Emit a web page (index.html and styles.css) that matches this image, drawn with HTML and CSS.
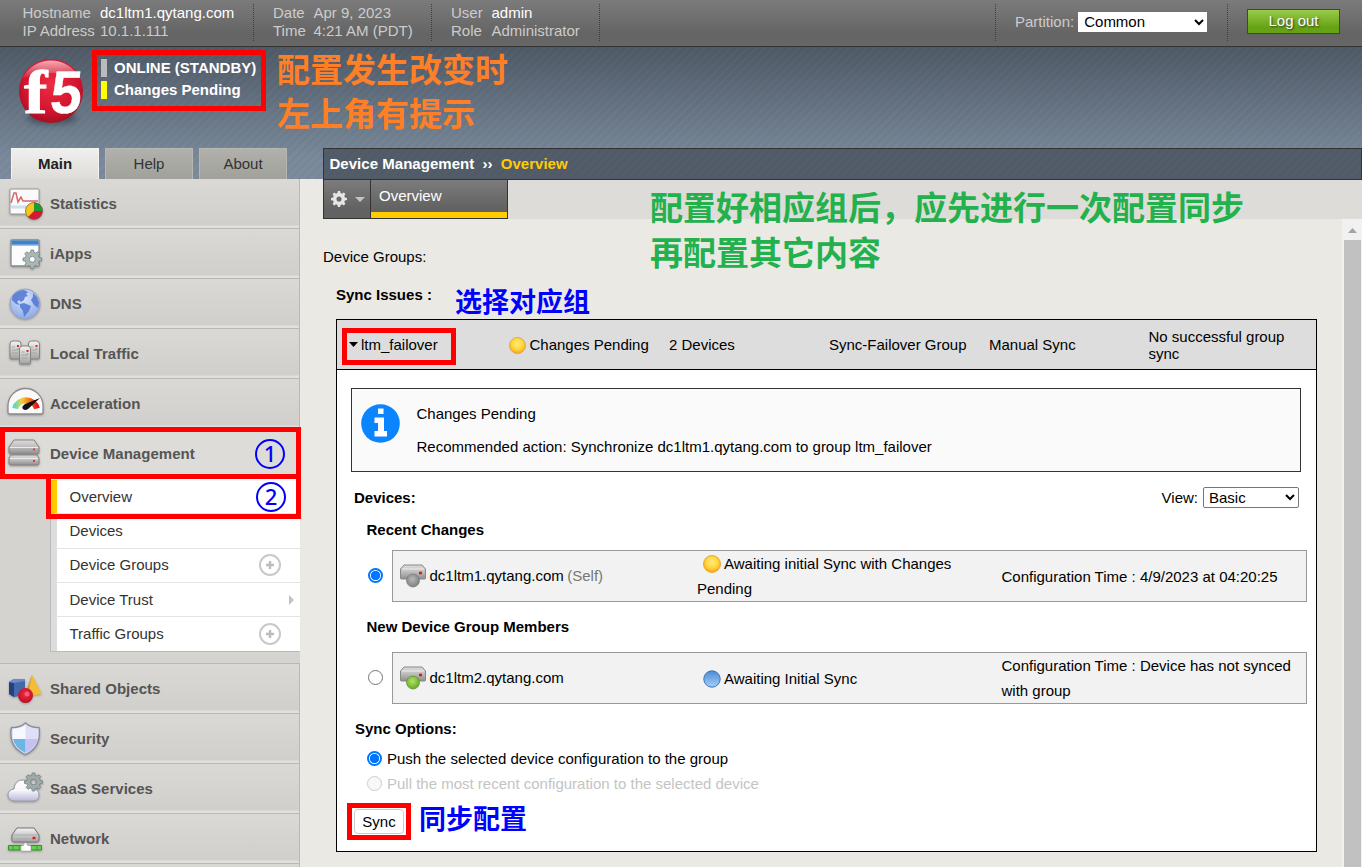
FILE: index.html
```
<!DOCTYPE html>
<html lang="en">
<head>
<meta charset="utf-8">
<title>Device Management - Overview</title>
<link rel="stylesheet" href="styles.css">
</head>
<body>
<svg class="defs" width="0" height="0">
  <defs>
    <linearGradient id="metal" x1="0" y1="0" x2="0" y2="1"><stop offset="0" stop-color="#f4f4f4"/><stop offset="1" stop-color="#a2a2a2"/></linearGradient>
    <radialGradient id="sun" cx=".5" cy=".4" r=".6"><stop offset="0" stop-color="#ffeb85"/><stop offset=".6" stop-color="#ffd535"/><stop offset="1" stop-color="#f2a21c"/></radialGradient>
    <linearGradient id="blue" x1="0" y1="0" x2="0" y2="1"><stop offset="0" stop-color="#4a8bd4"/><stop offset="1" stop-color="#a4d0fa"/></linearGradient>
    <radialGradient id="green" cx=".45" cy=".4" r=".6"><stop offset="0" stop-color="#b4e367"/><stop offset="1" stop-color="#62aa26"/></radialGradient>
    <radialGradient id="gray" cx=".45" cy=".4" r=".6"><stop offset="0" stop-color="#b8b8b8"/><stop offset="1" stop-color="#808080"/></radialGradient>
    <radialGradient id="globe" cx=".45" cy=".3" r=".75"><stop offset="0" stop-color="#dbe5fd"/><stop offset="1" stop-color="#86a5e6"/></radialGradient>
    <radialGradient id="ball" cx=".5" cy=".4" r=".65"><stop offset="0" stop-color="#ec2c42"/><stop offset=".65" stop-color="#d3142e"/><stop offset="1" stop-color="#96101f"/></radialGradient>
    <linearGradient id="shine" x1="0" y1="0" x2="0" y2="1"><stop offset="0" stop-color="#fff" stop-opacity=".65"/><stop offset="1" stop-color="#fff" stop-opacity="0"/></linearGradient>
    <linearGradient id="cloud" x1="0" y1="0" x2="0" y2="1"><stop offset="0" stop-color="#fff"/><stop offset=".5" stop-color="#f6f6fb"/><stop offset="1" stop-color="#b9b9da"/></linearGradient>
    <linearGradient id="dial" x1="0" y1="0" x2="1" y2="0"><stop offset="0" stop-color="#56dcc8"/><stop offset=".3" stop-color="#f2d13a"/><stop offset=".6" stop-color="#f2851c"/><stop offset="1" stop-color="#e8141c"/></linearGradient>
    <linearGradient id="slab" x1="0" y1="0" x2="0" y2="1"><stop offset="0" stop-color="#dcdcdc"/><stop offset=".5" stop-color="#bdbdbd"/><stop offset="1" stop-color="#8e8e8e"/></linearGradient>
    <path id="cog" d="M8.6 0h2.8l.5 2.6 1.9.8L16 1.9l2 2-1.4 2.3.8 1.9 2.6.5v2.8l-2.6.5-.8 1.9 1.4 2.2-2 2-2.2-1.4-1.9.8-.5 2.6H8.6l-.5-2.6-1.9-.8L4 18.1l-2-2 1.4-2.2-.8-1.9-2.6-.5V8.7l2.6-.5.8-1.9L2 4l2-2 2.2 1.4 1.9-.8zM10 6.8a3.2 3.2 0 1 0 0 6.4a3.2 3.2 0 0 0 0-6.4z" fill-rule="evenodd"/>
  </defs>
</svg>

<header class="topbar">
  <dl class="facts host"><dt>Hostname</dt><dd class="hi">dc1ltm1.qytang.com</dd><dt>IP Address</dt><dd>10.1.1.111</dd></dl>
  <dl class="facts date"><dt>Date</dt><dd>Apr 9, 2023</dd><dt>Time</dt><dd>4:21 AM (PDT)</dd></dl>
  <dl class="facts user"><dt>User</dt><dd class="hi">admin</dd><dt>Role</dt><dd>Administrator</dd></dl>
  <div class="partition"><label for="part">Partition:</label><select id="part"><option>Common</option></select></div>
  <div class="logout"><button class="btn-logout">Log out</button></div>
</header>

<div class="banner">
  <div class="brand">
    <svg class="logo" width="72" height="72" viewBox="0 0 72 72">
      <ellipse class="shade" cx="37" cy="61" rx="25" ry="6"/>
      <circle cx="36" cy="34" r="32" fill="url(#ball)"/>
      <path d="M7 22A32 32 0 0 1 65 22Q36 10 7 22z" fill="url(#shine)"/>
      <text class="logo-f" transform="translate(9 56) scale(1.15 1)">f</text>
      <text class="logo-5" transform="translate(34 56) skewX(-5) scale(.94 1)">5</text>
    </svg>
    <ul class="status"><li>ONLINE (STANDBY)</li><li class="pending">Changes Pending</li></ul>
  </div>
  <nav class="tabs"><a class="tab active">Main</a><a class="tab">Help</a><a class="tab">About</a></nav>
</div>

<div class="body">
  <aside class="sidebar">
    <a class="item"><svg class="ico" width="36" height="36" viewBox="0 0 36 36"><rect x="2" y="2" width="29" height="25" rx="1" fill="#fafafa" stroke="#9a9a9a"/><path d="M3 20h28" stroke="#cfdeee" stroke-width="3"/><path d="M3 16 6 6h2l2 9 3-5 2 4h15" fill="none" stroke="#d8646c" stroke-width="1.500"/><circle cx="26" cy="24" r="8.500" fill="#d81832"/><path d="M26 24V15.500a8.500 8.500 0 0 1 8.500 8.500z" fill="#1c9b35"/><path d="M26 24V15.500a8.500 8.500 0 0 0-6 14.500z" fill="#f3c51d"/><circle cx="26" cy="24" r="8.500" fill="none" stroke="#70451f" stroke-opacity=".5"/></svg>Statistics</a>
    <a class="item"><svg class="ico" width="36" height="36" viewBox="0 0 36 36"><rect x="3" y="3" width="28" height="26" rx="1" fill="#fcfcfc" stroke="#858b91" stroke-width="1.300"/><path d="M3.500 3.500h27v5h-27z" fill="#3e83ca"/><path d="M4 8h26" stroke="#9fc6ee"/><use href="#cog" transform="translate(15 13) scale(.93)" fill="#abb7b6" stroke="#7d8989"/></svg>iApps</a>
    <a class="item"><svg class="ico" width="36" height="36" viewBox="0 0 36 36"><circle cx="17" cy="17" r="15" fill="url(#globe)" stroke="#98a3bd"/><path d="M4.500 9Q9 3 16 3l4 2-2 2 2 2-3 1-1 3-3 2-2-2-2 2 3 3-4-1-4-4zM12 17l4-1 7 3-2 5-5 6-1-6-3-4zM25 6l4 4 2 6-1 5-4-3-3-5 2-3z" fill="#4f76d0" opacity=".85"/></svg>DNS</a>
    <a class="item"><svg class="ico" width="36" height="36" viewBox="0 0 36 36" stroke="#848484"><g id="srv"><path d="M2 7q0-3 3-3h5q3 0 3 3v14q0 1-1 1H3q-1 0-1-1z" fill="url(#metal)"/><path d="M4 10h3m-3 3h6m-6 3h6" stroke="#a5a5a5"/><path d="M9 9h2" stroke="#e22" stroke-width="2"/><path d="M9 12h2" stroke="#5b3"/></g><use href="#srv" x="18.500"/><use href="#srv" x="9.500" y="5"/></svg>Local Traffic</a>
    <a class="item"><svg class="ico" width="36" height="36" viewBox="0 0 36 36"><path d="M0 25V19a17.500 17.500 0 0 1 35 0v6q0 2-2 2H2q-2 0-2-2z" fill="#fafafa" stroke="#8b8b8b" stroke-width="1.300"/><path d="M7 21.500a11.500 11.500 0 0 1 22 0" fill="none" stroke="url(#dial)" stroke-width="6"/><path d="M32 11 17 17q-4 3-2 5t5 0z" fill="#111"/></svg>Acceleration</a>
    <a class="item current"><svg class="ico" width="36" height="36" viewBox="0 0 36 36"><g stroke="#858585"><path d="M1 10 6 3h20l5 7v5q0 2-2 2H3q-2 0-2-2z" fill="url(#slab)"/><path d="M1 21 3 18h26l2 3v5q0 2-2 2H3q-2 0-2-2z" fill="url(#slab)"/></g><path d="M2 10.500h28M2 21.500h28" stroke="#ececec"/><path d="M25 12.500h2m-2 11.500h2" stroke="#e8334a" stroke-width="2"/></svg>Device Management</a>
    <div class="subwrap">
      <ul class="submenu">
        <li class="on">Overview</li>
        <li>Devices</li>
        <li>Device Groups<svg class="plus" width="24" height="24" viewBox="0 0 24 24"><circle cx="12" cy="12" r="10" fill="none" stroke="#c9c9c9" stroke-width="2"/><path d="M12 8v8M8 12h8" stroke="#bcbcbc" stroke-width="2.400"/></svg></li>
        <li>Device Trust<svg class="arrow" width="6" height="10" viewBox="0 0 6 10"><path d="M0 0 5 5 0 10z" fill="#c4c4c4"/></svg></li>
        <li>Traffic Groups<svg class="plus" width="24" height="24" viewBox="0 0 24 24"><circle cx="12" cy="12" r="10" fill="none" stroke="#c9c9c9" stroke-width="2"/><path d="M12 8v8M8 12h8" stroke="#bcbcbc" stroke-width="2.400"/></svg></li>
      </ul>
    </div>
    <a class="item"><svg class="ico" width="36" height="36" viewBox="0 0 36 36"><path d="M1 10 6 7h11v16L6 25l-5-3z" fill="#4468ac"/><path d="M1 10l5 1v14l-5-3z" fill="#26407a"/><path d="M1 10 6 7h11v2L6 11z" fill="#6b8bc9"/><path d="M24 3 34 22l-14 2z" fill="#f3bd36"/><path d="M24 3 20 24l-3-2z" fill="#dca02a"/><circle cx="17.500" cy="23.500" r="7.500" fill="url(#ball)"/><circle cx="19" cy="22" r="2.500" fill="#f7899a" opacity=".6"/></svg>Shared Objects</a>
    <a class="item"><svg class="ico" width="36" height="36" viewBox="0 0 36 36"><path d="M3.500 5.500Q12 6 17.500 1 23 6 31 5.500 34 25 17.500 32.500 0 25 3.500 5.500z" fill="#dfdff8" stroke="#878d98" stroke-width="1.300"/><path d="M5 17h12.500V31Q7 26 5 17z" fill="#6bb6e4"/><path d="M17.500 17H30q-2 9-12.500 14z" fill="#c3c2f3"/><path d="M5 7q8-.5 12.500-4v14H4.800z" fill="#f7f8ff"/></svg>Security</a>
    <a class="item"><svg class="ico" width="36" height="36" viewBox="0 0 36 36"><path d="M6 29q-6-1-6-6t6-6q1-9 9-9 7 0 8 8 8 1 8 7 0 6-6 6z" fill="url(#cloud)" stroke="#9d9daa"/><use href="#cog" transform="translate(16.500 1) scale(.9)" fill="#9eabaa" stroke="#7b8887"/></svg>SaaS Services</a>
    <a class="item"><svg class="ico" width="36" height="36" viewBox="0 0 36 36"><path d="M4 13 9 6h17l5 7v5q0 2-2 2H6q-2 0-2-2z" fill="url(#metal)" stroke="#777"/><path d="M5 13h25M8 17h14" stroke="#aaa"/><path d="M24.500 16h3" stroke="#e21b2b" stroke-width="2.400"/><path d="M.5 23.500h33v4.500h-33z" fill="#62d14c" stroke="#3a8d2e"/><path d="M5 23v5M11 23v5M23 23v5M29 23v5" stroke="#3a9a2e"/><path d="M13 29v-5l3-1v-2h3v2l4 1v5z" fill="#fff" stroke="#aaa" stroke-width=".6"/></svg>Network</a>
  </aside>

  <main class="main">
    <div class="crumbs">Device Management <span class="sep">››</span> <em>Overview</em></div>
    <div class="toolbar">
      <div class="gear"><svg width="16" height="16" viewBox="0 0 20 20"><use href="#cog" fill="#e6e6e6"/></svg><svg width="10" height="5" viewBox="0 0 10 5"><path d="M0 0h10L5 5z" fill="#c4c4c4"/></svg></div>
      <div class="pagetab">Overview</div>
    </div>
    <div class="scroller">
      <div class="content">
        <div class="dg">Device Groups:</div>
        <h3 class="issues">Sync Issues :</h3>
        <section class="panel">
          <div class="grouprow">
            <span class="name"><svg width="9" height="5" viewBox="0 0 9 5"><path d="M0 0h9L4.500 5z"/></svg>ltm_failover</span>
            <span class="state"><svg width="17" height="17" viewBox="0 0 18 18"><circle cx="9" cy="9" r="8.500" fill="url(#sun)" stroke="#eda53b"/></svg>Changes Pending</span>
            <span>2 Devices</span><span>Sync-Failover Group</span><span>Manual Sync</span><span class="last">No successful group sync</span>
          </div>
          <div class="detail">
            <div class="info">
              <svg width="40" height="40" viewBox="0 0 40 40"><circle cx="19.500" cy="19.500" r="19.300" fill="#0a84ff"/><path d="M17 4.500h5.500v5.500h-5.500zM13.500 13.500h9.500V27h3v5.500H13.500V27h3.500v-8h-3.500z" fill="#fff"/></svg>
              <div class="msg"><p>Changes Pending</p><p>Recommended action: Synchronize dc1ltm1.qytang.com to group ltm_failover</p></div>
            </div>
            <div class="devhead"><b>Devices:</b><span class="view">View: <select><option>Basic</option></select></span></div>
            <h4 class="sub1">Recent Changes</h4>
            <div class="devline">
              <i class="radio checked"></i>
              <div class="device">
                <span class="dname"><svg width="26" height="24" viewBox="0 0 26 24"><path d="M.5 5 4 1h18l3.500 4v9q0 1-1 1h-23q-1 0-1-1z" fill="url(#slab)" stroke="#888"/><path d="M2 5h22" stroke="#eee"/><path d="M19 9h3" stroke="#e11" stroke-width="2.500"/><circle cx="13" cy="16.500" r="6.500" fill="url(#gray)" stroke="#777" stroke-width=".7"/></svg>dc1ltm1.qytang.com<small>(Self)</small></span>
                <span class="dstate"><svg width="18" height="18" viewBox="0 0 18 18"><circle cx="9" cy="9" r="8.500" fill="url(#sun)" stroke="#eda53b"/></svg>Awaiting initial Sync with Changes Pending</span>
                <span class="dtime">Configuration Time : 4/9/2023 at 04:20:25</span>
              </div>
            </div>
            <h4 class="sub2">New Device Group Members</h4>
            <div class="devline">
              <i class="radio"></i>
              <div class="device">
                <span class="dname"><svg width="26" height="24" viewBox="0 0 26 24"><path d="M.5 5 4 1h18l3.500 4v9q0 1-1 1h-23q-1 0-1-1z" fill="url(#slab)" stroke="#888"/><path d="M2 5h22" stroke="#eee"/><path d="M19 9h3" stroke="#e11" stroke-width="2.500"/><circle cx="13" cy="16.500" r="6.500" fill="url(#green)" stroke="#58932b" stroke-width=".7"/></svg>dc1ltm2.qytang.com</span>
                <span class="dstate"><svg width="18" height="18" viewBox="0 0 18 18"><circle cx="9" cy="9" r="8.200" fill="url(#blue)" stroke="#3d74b4"/></svg>Awaiting Initial Sync</span>
                <span class="dtime">Configuration Time : Device has not synced with group</span>
              </div>
            </div>
            <h4 class="opts">Sync Options:</h4>
            <div class="opt"><i class="radio checked"></i>Push the selected device configuration to the group</div>
            <div class="opt off"><i class="radio"></i>Pull the most recent configuration to the selected device</div>
            <button class="btn-sync">Sync</button>
          </div>
        </section>
      </div>
      <div class="scrollbar"><svg width="9" height="5" viewBox="0 0 11 6"><path d="M0 6 5.500 0 11 6z" fill="#a3a3a3"/></svg><div class="thumb"></div></div>
    </div>
  </main>
</div>

<div class="mark box-status"></div>
<div class="mark box-menu"></div>
<div class="mark box-overview"></div>
<div class="mark box-group"></div>
<div class="mark box-sync"></div>
<div class="note num one">1</div>
<div class="note num two">2</div>
<div class="note big orange">配置发生改变时<br>左上角有提示</div>
<div class="note big greenn">配置好相应组后，应先进行一次配置同步<br>再配置其它内容</div>
<div class="note small pick">选择对应组</div>
<div class="note small push">同步配置</div>
</body>
</html>
```
FILE: styles.css
```
* { box-sizing: border-box; }
body {
  margin: 0; width: 1362px; height: 867px; overflow: hidden; position: relative;
  background: #eae9e4; color: #000;
  font: 15px/18px "Liberation Sans", Arial, sans-serif;
}
h3, h4, p, ul, dl, dd { margin: 0; padding: 0; font-size: 15px; }
ul { list-style: none; }
svg { display: block; flex: none; }
.defs { position: absolute; }
select { font: 15px "Liberation Sans", Arial, sans-serif; background-color: #fff; color: #000; }

.topbar {
  display: flex; height: 47px; padding-top: 4px; padding-left: 22.5px;
  background: linear-gradient(#7b7b7b, #646464 75%, #676767); border-bottom: 1px solid #333; color: #ccc;
}
.facts { display: grid; align-content: start; grid-auto-rows: 18px; height: 37px; border-right: 1px dotted #3d3d3d; }
.facts .hi { color: #fff; }
.host { grid-template-columns: 77.5px 153px; width: 231.5px; }
.date { grid-template-columns: 40.5px 137px; padding-left: 19px; width: 178px; }
.user { grid-template-columns: 40.5px 108px; padding-left: 19px; width: 168px; }
.partition { margin-left: auto; width: 233px; height: 37px; border: 1px dotted #3d3d3d; border-width: 0 1px; display: flex; align-items: center; padding-left: 19px; gap: 4px; padding-bottom: 2px; }
.partition select { width: 129px; height: 20px; border: 0; padding-left: 2px; border-radius: 0; }
.logout { width: 134px; padding: 5px 0 0 19px; }
.btn-logout {
  width: 93px; height: 25px; padding: 0 0 2px; display: block; color: #fff; font: 15px "Liberation Sans", Arial, sans-serif;
  border: 1px solid #3d4a2c; background: linear-gradient(#9acb4b, #66a314 75%); text-shadow: 1px 1px 2px #333;
}

.banner {
  height: 132px; display: flex; flex-direction: column; justify-content: space-between;
  background: repeating-linear-gradient(135deg, rgba(255,255,255,.015) 0 3px, rgba(0,0,0,.015) 3px 6px), linear-gradient(#4e5966, #79899a 85%, #7b8a9b);
}
.brand { display: flex; padding: 10px 0 0 15px; }
.logo { overflow: visible; }
.shade { fill: #333d48; opacity: .7; filter: blur(3px); }
.logo text { fill: #fff; stroke: #fff; line-height: 1; }
.logo-f { font: bold 61px "Liberation Serif", serif; stroke-width: 1px; }
.logo-5 { font: bold 60px "Liberation Sans", Arial, sans-serif; stroke-width: .4px; }
.status { padding-left: 14px; color: #fff; font-weight: bold; }
.status li { height: 22px; line-height: 20px; display: flex; align-items: flex-start; gap: 7px; padding-top: 1px; }
.status li::before { content: ""; width: 6px; height: 18px; margin-top: 1px; background: #bbb; }
.status .pending::before { background: #ff0; }
.tabs { display: flex; gap: 6px; padding-left: 11px; }
.tab { width: 88px; height: 31px; line-height: 29px; text-align: center; background: linear-gradient(#b1b0ab, #a1a19b); border: solid #b7b7b2; border-width: 1px 1px 0; color: #333; }
.tab.active { background: linear-gradient(#f1f0ee, #dddcd8); font-weight: bold; color: #222; border-color: #f4f4f1; }

.body { display: flex; height: 688px; }
.sidebar { width: 300px; flex: none; background: #d8d7d3; border-right: 1px solid #b9b9b9; }
.item {
  display: flex; align-items: center; gap: 6px; height: 50px; padding-left: 8px;
  font-weight: bold; color: #555; letter-spacing: .03px;
  background: linear-gradient(#dad9d5, #d0cfcb 46px, #e1e0dd 47px); border-bottom: 1px solid #b8b8b6;
}
.ico { margin-top: 3px; overflow: visible; filter: drop-shadow(0 1px 1px #999); }
.item.current { background: #dedcd9; }
.subwrap { height: 185px; padding-left: 50px; border-bottom: 1px solid #b8b8b6; margin-right: -1px; background: #d4d3cf; }
.submenu { height: 173px; padding-top: 1px; background: #fff; border: solid #bbb; border-width: 0 0 1px 1px; }
.submenu li { height: 34.3px; padding-left: 12.5px; border-left: 6px solid #ddd; border-bottom: 1px solid #e4e4e4; display: flex; align-items: center; color: #333; }
.submenu li.on { border-left-color: #fc0; }
.submenu li:last-child { border-bottom: 0; }
.plus { margin: 0 18px 0 auto; }
.arrow { margin: 0 5px 0 auto; }

.main { flex: 1; margin: -31px 0 0 23px; display: flex; flex-direction: column; }
.crumbs {
  height: 32px; flex: none; line-height: 30px; padding-left: 5.5px; border: 1px solid #333; color: #fff; font-weight: bold; letter-spacing: .03px;
  background: repeating-linear-gradient(135deg, #525d69 0 3px, #505b67 3px 6px);
}
.crumbs em { font-style: normal; color: #fc0; margin-left: 4px; }
.sep { margin-left: 4px; }
.toolbar { display: flex; height: 39px; flex: none; background: #dedcd8; }
.gear { width: 48px; display: flex; align-items: center; gap: 8px; padding-left: 7px; border: solid #333; border-width: 0 1px 1px; background: linear-gradient(#7c7c7c, #626262 75%); }
.pagetab { width: 137px; padding: 7px 0 0 8px; color: #fff; border: solid #333; border-width: 0 1px 1px 0; background: linear-gradient(#fc0, #fc0) 0 100% / 100% 6px no-repeat, linear-gradient(#7c7c7c, #626262 75%); }
.scroller { display: flex; flex: 1; }
.content { width: 994px; padding-top: 29px; }
.issues { margin: 20px 0 0 13px; }
.panel { margin: 15px 0 0 13px; width: 981px; height: 533px; border: 1px solid #000; background: #fff; }
.grouprow { height: 50px; display: grid; grid-template-columns: 160px 160px 160px 160px 159.5px 1fr; align-items: center; padding-left: 12px; background: #ddd; border-bottom: 1px solid #000; line-height: 17px; }
.grouprow .name { display: flex; align-items: center; gap: 3px; }
.grouprow .state { display: flex; align-items: center; gap: 4px; margin: -1px 0 0 -.5px; }
.state svg { margin-top: 3px; }
.last { padding-right: 25px; }
.detail { padding: 18px 9px 0 14px; }
.info { width: 950px; height: 84px; display: flex; border: 1px solid #333; background: #fafafa; padding: 15px 9px; gap: 15.5px; }
.msg { display: flex; flex-direction: column; gap: 15px; padding-top: 1px; }
.devhead { display: flex; justify-content: space-between; align-items: center; height: 21px; margin: 15px 8px 0 3px; }
.view { display: flex; align-items: center; gap: 5px; }
.view select { width: 96px; height: 21px; border: 1px solid #767676; border-radius: 2px; padding-left: 1px; }
.sub1, .sub2 { margin: 13px 0 11px 15.5px; height: 18px; }
.sub2 { margin: 16px 0 16px 15.5px; }
.devline { display: flex; align-items: center; gap: 9px; padding-left: 17px; }
.radio { width: 15px; height: 15px; border: 1px solid #767676; border-radius: 50%; background: #fff; flex: none; margin-bottom: 2px; }
.opt .radio { margin: 0; }
.radio.checked { border: 2px solid #0075ff; background: radial-gradient(#0075ff 4.3px, #fff 5px); }
.device { height: 52px; flex: 1; display: grid; grid-template-columns: 297px 304.5px 1fr; align-items: center; padding: 0 0 1px 7px; border: 1px solid #999; background: #f2f2f2; line-height: 25px; }
.dname { display: flex; align-items: center; gap: 3.5px; margin-top: -1px; }
.dname small { font-size: 15px; color: #777; }
.dstate svg { display: inline-block; vertical-align: -4px; margin: 0 3px 0 6px; }
.dstate { padding-right: 40px; }
.opts { margin: 16px 0 8px 4px; height: 18px; }
.opt { display: flex; align-items: center; gap: 5px; height: 25px; padding-left: 16px; }
.opt.off { color: #c4c4c4; }
.opt.off .radio { border-color: #ccc; background: #f8f8f8; }
.btn-sync { display: block; width: 50px; height: 25px; margin: 13px 0 0 3px; padding: 0; font: 15px "Liberation Sans", Arial, sans-serif; border: 1px solid #ccc; border-radius: 4px; background: #fff; color: #000; }
.scrollbar { width: 20px; margin-left: auto; padding-left: 2px; padding-right: 1px; background: #f1f1f1; display: flex; flex-direction: column; align-items: center; }
.scrollbar svg { margin: 9px 0 7px; }
.thumb { width: 17px; flex: 1; background: #c1c1c1; }

/* Tutorial annotations drawn over the console */
.mark { position: absolute; border: 5px solid #f00; }
.box-status { left: 92px; top: 50px; width: 174px; height: 61px; }
.box-menu { left: 0; top: 427px; width: 301px; height: 52px; }
.box-overview { left: 46px; top: 474px; width: 255px; height: 45px; }
.box-group { left: 342px; top: 328px; width: 114px; height: 37px; }
.box-sync { left: 347px; top: 803px; width: 64px; height: 37px; }
.note { position: absolute; white-space: nowrap; font-family: "Noto Sans CJK SC", sans-serif; font-weight: bold; }
.big { font-size: 33px; line-height: 44px; }
.small { font-size: 27px; line-height: 36px; color: #00f; }
.orange { left: 277px; top: 46px; color: #ff7f27; }
.greenn { left: 650px; top: 184px; color: #22b14c; line-height: 45px; }
.pick { left: 455px; top: 283px; }
.push { left: 419px; top: 800px; }
.num { width: 30px; height: 30px; border: 2.5px solid #00f; border-radius: 50%; color: #00f; text-align: center; font: 500 22px/25px "Noto Sans", sans-serif; }
.one { left: 255px; top: 439px; }
.two { left: 256px; top: 482px; }
```
